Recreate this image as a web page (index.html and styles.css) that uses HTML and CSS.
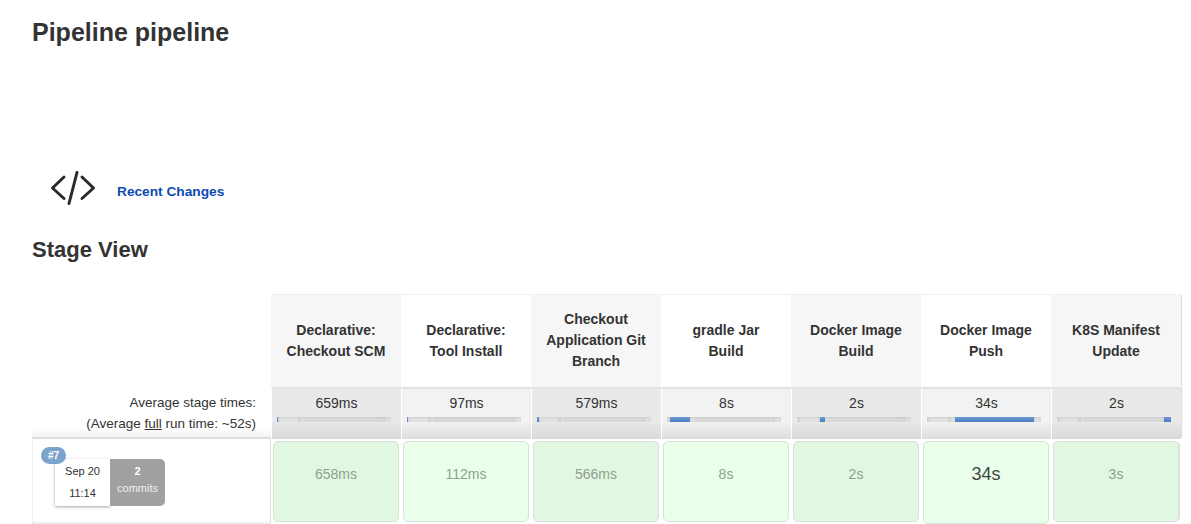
FILE: index.html
```html
<!DOCTYPE html>
<html lang="en">
<head>
<meta charset="utf-8">
<title>Pipeline pipeline</title>
<link rel="stylesheet" href="styles.css">
</head>
<body>
<main class="main">
  <h1 class="title">Pipeline pipeline</h1>
  <div class="changes">
    <svg class="changes-icon" width="48" height="34" viewBox="0 0 48 34" fill="none" stroke="#2b2b2b" stroke-width="3" stroke-linecap="round" stroke-linejoin="round"><path d="M15 6 3.500 17 15 27.500"/><path d="M33 6 44.500 17 33 27.500"/><path d="M28 1.500 20 32.500"/></svg>
    <a class="changes-link" href="#">Recent Changes</a>
  </div>
  <h2 class="subtitle">Stage View</h2>
  <div class="stage">
    <div class="corner"></div>
    <div class="head odd">Declarative:<br>Checkout SCM</div>
    <div class="head">Declarative:<br>Tool Install</div>
    <div class="head odd">Checkout<br>Application Git<br>Branch</div>
    <div class="head">gradle Jar<br>Build</div>
    <div class="head odd">Docker Image<br>Build</div>
    <div class="head">Docker Image<br>Push</div>
    <div class="head odd">K8S Manifest<br>Update</div>

    <div class="avg-label">Average stage times:<br>(Average <u>full</u> run time: ~52s)</div>
    <div class="avg dark"><span>659ms</span><div class="track"><i class="fill" style="margin-left:0;width:1px"></i></div></div>
    <div class="avg"><span>97ms</span><div class="track"><i class="fill" style="margin-left:0;width:1px"></i></div></div>
    <div class="avg dark"><span>579ms</span><div class="track"><i class="fill" style="margin-left:0;width:2px"></i></div></div>
    <div class="avg"><span>8s</span><div class="track"><i class="fill" style="margin-left:3px;width:20px"></i></div></div>
    <div class="avg dark"><span>2s</span><div class="track"><i class="fill" style="margin-left:23px;width:5px"></i></div></div>
    <div class="avg"><span>34s</span><div class="track"><i class="fill" style="margin-left:28px;width:79px"></i></div></div>
    <div class="avg dark"><span>2s</span><div class="track"><i class="fill" style="margin-left:107px;width:7px"></i></div></div>

    <div class="build">
      <span class="badge">#7</span>
      <div class="date"><span>Sep 20</span><span>11:14</span></div>
      <div class="commits"><b>2</b><span>commits</span></div>
    </div>
    <div class="cell dark">658ms</div>
    <div class="cell">112ms</div>
    <div class="cell dark">566ms</div>
    <div class="cell">8s</div>
    <div class="cell dark">2s</div>
    <div class="cell big">34s</div>
    <div class="cell dark">3s</div>
  </div>
</main>
</body>
</html>
```
FILE: styles.css
```css
* { box-sizing: border-box; }
html, body { margin: 0; height: 524px; overflow: hidden; background: #fff; }
body { font-family: "Liberation Sans", Arial, sans-serif; color: #333; }
.main { padding: 18px 0 0 32px; }
.title { margin: 0; font-size: 25px; line-height: 28px; font-weight: 700; color: #333; }
.changes { display: flex; align-items: center; margin: 119px 0 0 17px; height: 46px; }
.changes-icon { display: block; margin-right: 20px; }
.changes-link { font-size: 13.7px; font-weight: 700; color: #0b4bb3; text-decoration: none; position: relative; top: 3px; }
.subtitle { margin: 26px 0 0; font-size: 22px; line-height: 26px; font-weight: 700; color: #333; }
.stage {
  display: grid;
  grid-template-columns: 239px repeat(7, 130px);
  grid-template-rows: 93px 52px 85px;
  margin-top: 31px;
  width: 1150px;
}
.corner { background: #fff; }
.head {
  display: flex; align-items: center; justify-content: center; text-align: center;
  font-size: 14px; line-height: 21px; font-weight: 700; color: #333;
  background: #fff; border-top: 1px solid #f0f0f0;
  padding-bottom: 1px;
}
.head.odd { background: #f6f6f6; }
.head:nth-child(8), .avg:nth-child(16), .cell:last-child { box-shadow: 2px 0 1px -1px #ddd; }
.avg-label {
  text-align: right; font-size: 13.5px; line-height: 21px; color: #333;
  padding: 5px 15px 0 0;
  border-bottom: 2px solid #ddd;
  background: linear-gradient(#fff 0, #fff 80%, #f3f3f3 100%);
}
.avg {
  display: flex; flex-direction: column; align-items: center;
  padding-top: 5px; font-size: 14px; line-height: 18px; color: #333;
  border-top: 2px solid #e2e2e2; border-left: 1px solid #fff;
  background: linear-gradient(#f2f2f2 0, #f2f2f2 65%, #ddd 100%);
}
.avg.dark { background: linear-gradient(#e9e9e9 0, #e9e9e9 65%, #d8d8d8 100%); }
.track {
  display: flex; align-items: stretch; align-self: flex-start; width: 114px; height: 5px; margin: 5px 0 0 5px;
  background: linear-gradient(90deg, #d6d6d6 0, #d6d6d6 3%, #e0e0e0 3%, #e0e0e0 18%, #d4d4d4 18%, #d4d4d4 21%, #dedede 21%, #dedede 23%, #d8d8d8 24%, #d8d8d8 93%, #d2d2d2 93%, #d2d2d2 95%, #dedede 95%, #dedede 100%);
  box-shadow: inset 0 1px 1px rgba(0,0,0,.06);
}
.fill { display: block; background: linear-gradient(#6b9ad8, #4d7dbf); }
.build {
  position: relative; display: flex; align-items: flex-start;
  padding: 20px 0 0 22px;
  border-bottom: 2px solid #eee; border-left: 1px solid #eee; border-right: 1px solid #ddd;
}
.badge {
  position: absolute; left: 8px; top: 8px; width: 25px; height: 17px; border-radius: 9px;
  background: #7ba3cc; color: #fff; font-size: 10px; font-weight: 700; line-height: 17px; text-align: center;
}
.date {
  display: flex; flex-direction: column; align-items: center; justify-content: space-between;
  width: 55px; height: 47px; padding: 6px 0 7px;
  font-size: 11px; line-height: 12px; color: #333; background: #fff;
  box-shadow: 0 1px 3px rgba(0,0,0,.35);
}
.commits {
  display: flex; flex-direction: column; align-items: center;
  width: 55px; height: 47px; padding-top: 5px;
  background: #a0a0a0; color: #eee; border-radius: 0 5px 5px 0;
  font-size: 11px; line-height: 20px;
}
.commits b { font-size: 11px; line-height: 14px; color: #fff; }
.cell {
  display: flex; align-items: flex-start; justify-content: center;
  margin: 2px 2px 0; height: 81px; padding-top: 23px;
  font-size: 14px; line-height: 18px; color: #8f9f8f;
  background: #e9ffe9; border: 1px solid #d9e2d9; border-radius: 5px;
}
.cell.dark { background: #e2f7e2; }
.cell.big { font-size: 18px; line-height: 18px; color: #444; height: 83px; }
```
